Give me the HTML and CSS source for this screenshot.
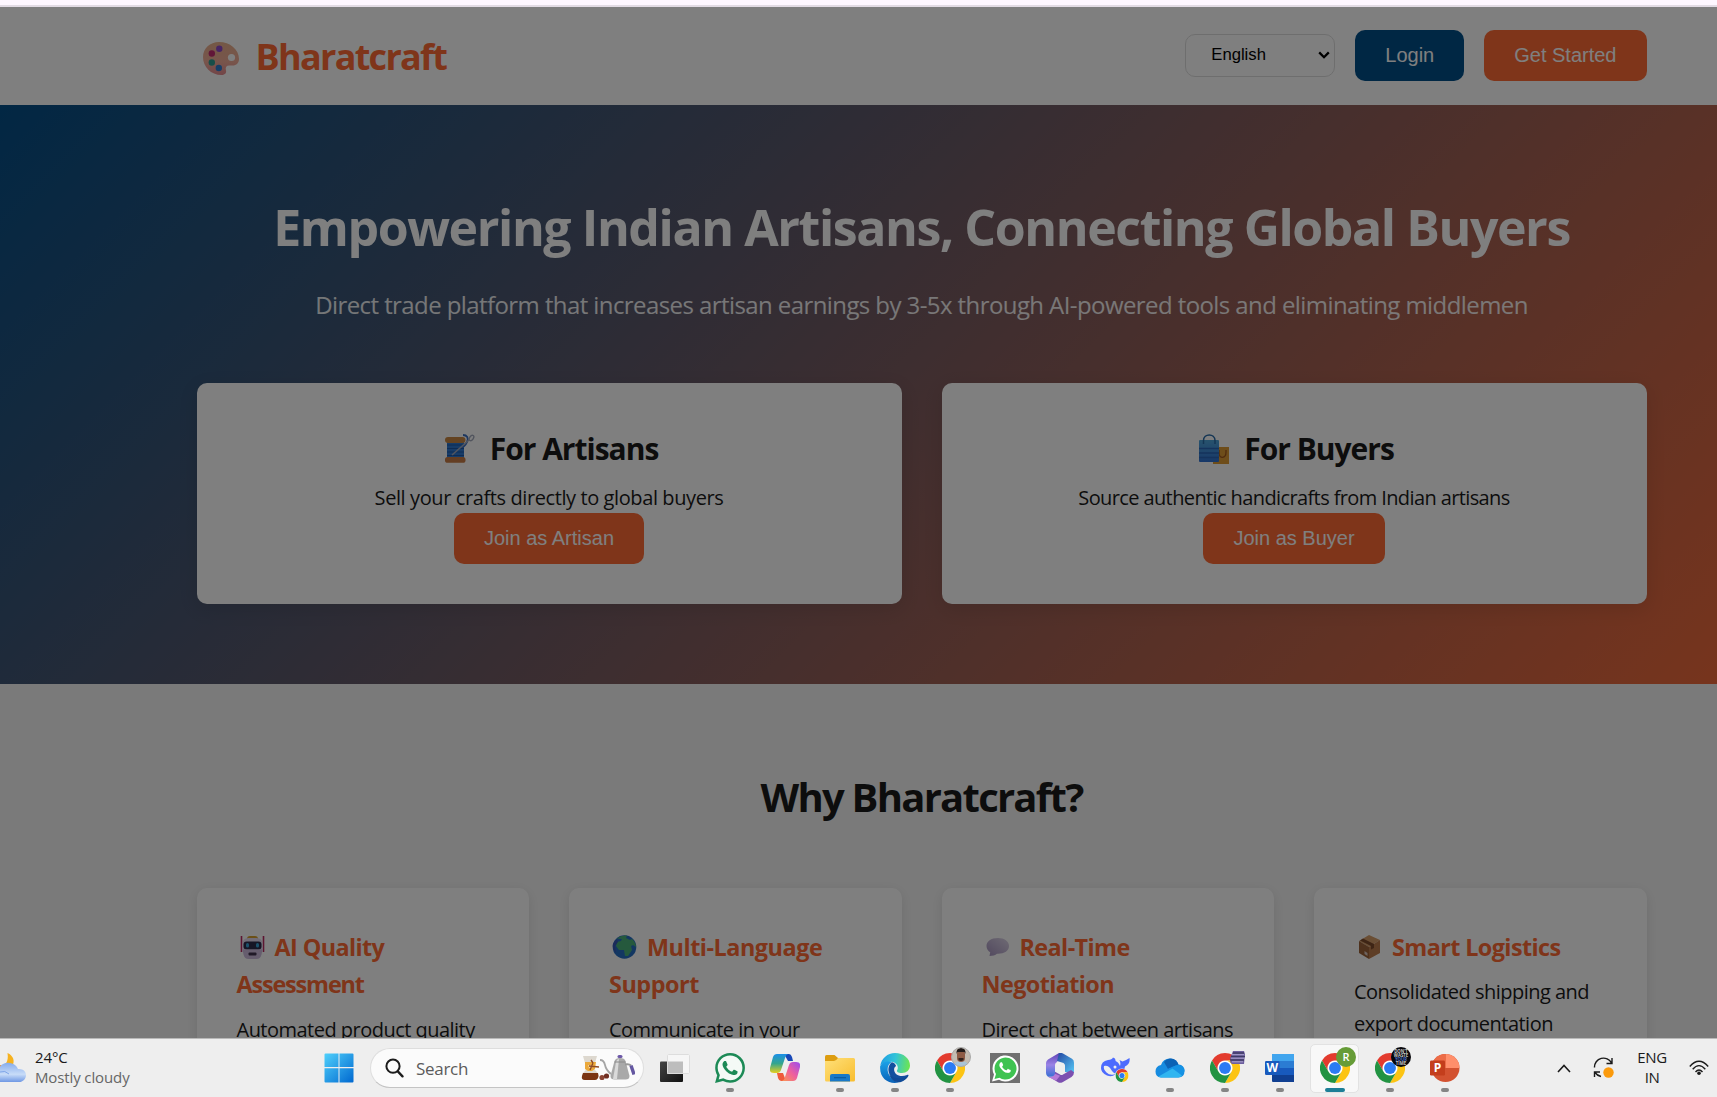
FILE: index.html
```html
<!DOCTYPE html>
<html lang="en">
<head>
<meta charset="utf-8">
<title>Bharatcraft</title>
<link rel="stylesheet" href="styles.css">
</head>
<body>
<svg class="defs" width="0" height="0" aria-hidden="true">
  <defs>
    <symbol id="chrome" viewBox="0 0 48 48">
      <circle cx="24" cy="24" r="12" fill="#fff"/>
      <path fill="#e33b2e" d="M24,12H44.7812a23.9939,23.9939,0,0,0-41.5639.0029L13.6079,30l.0093-.0024A11.9852,11.9852,0,0,1,24,12Z"/>
      <path fill="#fcc413" d="M34.3913,30.0029,24.0007,48A23.994,23.994,0,0,0,44.78,12.0031H23.9989l-.0025.0093A11.985,11.985,0,0,1,34.3913,30.0029Z"/>
      <path fill="#229342" d="M13.6086,30.0031,3.218,12.006A23.994,23.994,0,0,0,24.0025,48L34.3931,30.0029l-.0067-.0068a11.9852,11.9852,0,0,1-20.7778.007Z"/>
      <circle cx="24" cy="24" r="9.5" fill="#2b7bf3"/>
    </symbol>
    <symbol id="handset" viewBox="0 0 24 24">
      <path d="M17.472 14.382c-.297-.149-1.758-.867-2.03-.967-.273-.099-.471-.148-.67.15-.197.297-.767.966-.94 1.164-.173.199-.347.223-.644.075-.297-.15-1.255-.463-2.39-1.475-.883-.788-1.48-1.761-1.653-2.059-.173-.297-.018-.458.13-.606.134-.133.298-.347.446-.52.149-.174.198-.298.298-.497.099-.198.05-.371-.025-.52-.075-.149-.669-1.612-.916-2.207-.242-.579-.487-.5-.669-.51-.173-.008-.371-.01-.57-.01-.198 0-.52.074-.792.372-.272.297-1.04 1.016-1.04 2.479 0 1.462 1.065 2.875 1.213 3.074.149.198 2.096 3.2 5.077 4.487.709.306 1.262.489 1.694.625.712.227 1.36.195 1.871.118.571-.085 1.758-.719 2.006-1.413.248-.694.248-1.289.173-1.413-.074-.124-.272-.198-.57-.347m-5.421 7.403h-.004a9.87 9.87 0 01-5.031-1.378l-.361-.214-3.741.982.998-3.648-.235-.374a9.86 9.86 0 01-1.51-5.26c.001-5.45 4.436-9.884 9.888-9.884 2.64 0 5.122 1.03 6.988 2.898a9.825 9.825 0 012.893 6.994c-.003 5.45-4.437 9.884-9.885 9.884m8.413-18.297A11.815 11.815 0 0012.05 0C5.495 0 .16 5.335.157 11.892c0 2.096.547 4.142 1.588 5.945L.057 24l6.305-1.654a11.882 11.882 0 005.683 1.448h.005c6.554 0 11.89-5.335 11.893-11.893a11.821 11.821 0 00-3.48-8.413z"/>
    </symbol>
  </defs>
</svg>

<div class="desktop">
  <div class="browser-edge"></div>

  <div class="viewport">
    <div class="page">
      <header class="header">
        <div class="container header-row">
          <div class="logo">
            <svg class="logo-icon" viewBox="0 0 36 33">
              <defs><linearGradient id="pal" x1="0" y1="0" x2="0" y2="1"><stop offset="0" stop-color="#e8b08c"/><stop offset=".6" stop-color="#f0ab98"/><stop offset="1" stop-color="#e58a90"/></linearGradient></defs>
              <path fill="url(#pal)" d="M16 0C7 0 0 6.500 0 15c0 10 8 18 18.500 18 4 0 5.200-2.400 4.400-5-.7-2.600.6-4.500 3.200-4.500h3.400c4 0 6.500-2.500 6.500-6.500C36 7.500 27 0 16 0Z"/>
              <ellipse cx="28.500" cy="15.500" rx="3.600" ry="3.500" fill="#fff"/>
              <circle cx="16.300" cy="6.700" r="3.200" fill="#8f4ac8"/>
              <circle cx="8.800" cy="11.500" r="3.200" fill="#c22c70"/>
              <circle cx="8.800" cy="20.500" r="3.200" fill="#2f9d93"/>
              <circle cx="15.800" cy="26" r="3.200" fill="#2f7ccf"/>
            </svg>
            <span class="logo-text">Bharatcraft</span>
          </div>
          <nav class="controls">
            <div class="language"><span>English</span>
              <svg class="caret" viewBox="0 0 12 8"><path d="M1.200 1.400 6 6.200l4.800-4.800" fill="none" stroke="#000" stroke-width="2.300"/></svg>
            </div>
            <button class="btn btn-blue">Login</button>
            <button class="btn">Get Started</button>
          </nav>
        </div>
      </header>

      <section class="hero">
        <div class="container">
          <h1 class="hero-title">Empowering Indian Artisans, Connecting Global Buyers</h1>
          <p class="hero-sub">Direct trade platform that increases artisan earnings by 3-5x through AI-powered tools and eliminating middlemen</p>
          <div class="roles">
            <article class="role">
              <h3 class="role-title">
                <svg class="role-icon" viewBox="0 0 30 30">
                  <rect x="2" y="5" width="17" height="20" fill="#2f79d0"/>
                  <path d="M2 11h17M2 14.500h17M2 18h17M2 21.500h17" stroke="#1d58a8" stroke-width="1"/>
                  <rect x="0" y="3" width="20.500" height="6" rx="3" fill="#c98742"/>
                  <rect x="0" y="23" width="20.500" height="5.800" rx="2.600" fill="#c87c46"/>
                  <path d="M18 1c4 0 6 3 4 7s-4 5-5 5" fill="none" stroke="#3b6fc0" stroke-width="1.800"/>
                  <path d="M7 21 24 6" stroke="#a4aabc" stroke-width="1.600"/>
                  <ellipse cx="26.500" cy="4" rx="1.800" ry="3" transform="rotate(35 26.500 4)" fill="none" stroke="#a4aabc" stroke-width="1.400"/>
                </svg><span>For Artisans</span>
              </h3>
              <p class="role-text">Sell your crafts directly to global buyers</p>
              <button class="btn">Join as Artisan</button>
            </article>
            <article class="role">
              <h3 class="role-title">
                <svg class="role-icon" viewBox="0 0 30 30">
                  <rect x="14" y="13" width="16" height="17" fill="#dc9a35"/>
                  <path d="M20 16v3c0 6 7 6 7-1v-2" fill="none" stroke="#a0571d" stroke-width="1.300"/>
                  <defs><linearGradient id="bag" x1="0" y1="0" x2="0" y2="1"><stop offset="0" stop-color="#4fa6dc"/><stop offset="1" stop-color="#2f70d0"/></linearGradient></defs>
                  <rect x="0" y="6" width="20" height="22" rx="1" fill="url(#bag)"/>
                  <path d="M0 14.500h20M0 19h20M0 23.500h20" stroke="#2a66b8" stroke-width="1.300"/>
                  <path d="M4.500 10V6.500C4.500-1 16-1 16 6.500V10" fill="none" stroke="#286ba8" stroke-width="1.500"/>
                </svg><span>For Buyers</span>
              </h3>
              <p class="role-text role-text-long">Source authentic handicrafts from Indian artisans</p>
              <button class="btn">Join as Buyer</button>
            </article>
          </div>
        </div>
      </section>

      <section class="why">
        <div class="container">
          <h2 class="why-title">Why Bharatcraft?</h2>
          <div class="features">
            <article class="feature">
              <h3 class="feature-title"><svg class="feature-icon" viewBox="0 0 25 24">
                <path d="M1.500 1v16M23.500 1v16" stroke="#b82a63" stroke-width="1.600"/>
                <path d="M7 4q0-3 3-3h5q3 0 3 3z" fill="#d6a12e"/>
                <path d="M2.500 9q0-6 6-6h8q6 0 6 6v8h-20z" fill="#e3d8ef"/>
                <rect x="3.500" y="6.500" width="18" height="8" rx="3" fill="#2c2c4a"/>
                <rect x="6" y="8" width="3" height="4.500" rx="1.500" fill="#39a5d8"/><rect x="16" y="8" width="3" height="4.500" rx="1.500" fill="#39a5d8"/>
                <path d="M2.500 14.500h20l-1 5q-1 4.500-5 4.500h-8q-4 0-5-4.500z" fill="#cdbbdd"/>
                <rect x="8.500" y="17.500" width="8" height="3" rx="1" fill="#40324f"/>
              </svg>AI Quality <span class="tight">Assessment</span></h3>
              <p class="feature-text">Automated product quality inspection using AI</p>
            </article>
            <article class="feature">
              <h3 class="feature-title loose"><svg class="feature-icon" viewBox="0 0 25 24">
                <circle cx="12.500" cy="12" r="11.800" fill="#276fc4"/>
                <path d="M5 3.500Q9 0 15 .6L14 3l4 2 2-1q4 4 4 8l-3-2-2 1 1 4-4 6-3 0-1-6-5 0-3-4 1-4 4-1 1-2z" fill="#4bb37b"/>
                <path d="M.9 9Q3 5 5 4l1 3-3 4 1 7Q0 14 .9 9" fill="#3656b5"/>
              </svg>Multi-Language Support</h3>
              <p class="feature-text">Communicate in your preferred language</p>
            </article>
            <article class="feature">
              <h3 class="feature-title"><svg class="feature-icon" viewBox="0 0 25 24">
                <defs><linearGradient id="bub" x1="1" y1="0" x2="0" y2="1"><stop offset="0" stop-color="#ded6e8"/><stop offset="1" stop-color="#a391bd"/></linearGradient></defs>
                <path d="M13 3C6 3 1.500 6.500 1.500 11c0 3 1.700 5 3.700 6.300L4.500 21c3 0 6-1 7.500-2.300 7 .3 12-2.700 12-7.700 0-4.500-4.500-8-11-8z" fill="url(#bub)"/>
              </svg>Real-Time Negotiation</h3>
              <p class="feature-text">Direct chat between artisans and buyers</p>
            </article>
            <article class="feature">
              <h3 class="feature-title"><svg class="feature-icon" viewBox="0 0 25 24">
                <path d="M2 6 12 0l11 5-11 7z" fill="#d49c68"/>
                <path d="M2 6l10 6v12L2 18z" fill="#9c6238"/>
                <path d="M12 12 23 5v13l-11 6z" fill="#bd7c4c"/>
                <path d="M6 3.500 17 9v4l-3 1.500V11L3 5.500" fill="#7c4b2a"/>
                <path d="M7.500 16l3 2v3l-3-2z" fill="#dbc8c0"/>
              </svg>Smart Logistics</h3>
              <p class="feature-text">Consolidated shipping and export documentation</p>
            </article>
          </div>
        </div>
      </section>
    </div>
    <div class="scrim"></div>
  </div>

  <footer class="taskbar">
    <div class="weather">
      <svg class="weather-icon" viewBox="0 0 26 30">
        <defs><linearGradient id="cl" x1="0" y1="0" x2="0" y2="1"><stop offset="0" stop-color="#86acec"/><stop offset=".6" stop-color="#c8dcf8"/><stop offset="1" stop-color="#6f98e4"/></linearGradient></defs>
        <path d="M7.500 0c6 2.500 7.500 8 5 13L6 17H0v-3c5-1 9-5 7.500-14z" fill="#f6b21f"/>
        <path d="M0 12q3 1.500 5-1v5H0z" fill="#f07f1d"/>
        <path d="M0 13.500Q4 9 10 10q6 .8 8 6c5-.5 8 2.500 8 6.200S23 29 19 29H0z" fill="url(#cl)"/>
        <path d="M0 19q5-2 9 2" stroke="#7ea5e8" fill="none"/>
      </svg>
      <div class="weather-info"><span>24°C</span><span class="muted">Mostly cloudy</span></div>
    </div>
    <div class="slot">
      <svg class="icon" viewBox="0 0 30 30"><defs><linearGradient id="win" x1="0" y1="0" x2="1" y2="1"><stop offset="0" stop-color="#4fd0fb"/><stop offset="1" stop-color="#0068d0"/></linearGradient></defs>
      <path fill="url(#win)" d="M1.500.5H14.500V14H.5V1.500q0-1 1-1zM15.500.5H28.500q1 0 1 1V14h-14zM.5 15.200h14v14.300H1.500q-1 0-1-1zM15.500 15.200h14v13.300q0 1-1 1H15.500z"/></svg>
    </div>
    <div class="search">
      <svg class="glass" viewBox="0 0 19 20"><circle cx="8" cy="8.200" r="6.600" fill="none" stroke="#1c1c1c" stroke-width="2"/><path d="m12.800 13.400 4.700 5" stroke="#1c1c1c" stroke-width="2.300" stroke-linecap="round"/></svg>
      <span class="search-text">Search</span>
      <svg class="coffee" viewBox="0 0 54 26">
        <path d="M2 1h14l-2 7-3 4 4 4q3 3 2 7-1 2-3 2H4q-3 0-3-2 0-5 3-7l3-4-3-4z" fill="#ddd8cf"/>
        <path d="M4 7h11l-1 7-3 2H7l-3-2z" fill="#eba93c"/><path d="M7 10h5l-1 3H8z" fill="#f6d9a0"/>
        <path d="M2 18h15q1 3 0 5t-3 2H4q-4 0-3-4z" fill="#7b3412"/>
        <path d="m8 11 10 1M12 8l-3 7M10 5l2 3" stroke="#8f4a22" stroke-width="1.400"/>
        <circle cx="21" cy="22.500" r="2.600" fill="#8b4433"/><circle cx="25.500" cy="21" r="2.600" fill="#713023"/>
        <path d="M19 5q4 0 5 5t6 9" fill="none" stroke="#a5a5a5" stroke-width="1.800"/>
        <path d="M33.500 6q1-3 5.500-3t5.500 3l4 15q0 3.500-4 3.500H33.500q-4 0-4-3.500z" fill="#a9a9a9"/><path d="M35 7q1-3 3-3l-2 20-4 0z" fill="#dadada"/><path d="M33.500 7h11" stroke="#8a8a8a"/>
        <rect x="36.500" y="0" width="5" height="3" rx="1.500" fill="#6d59a8"/>
        <path d="M44 9.500q4-1 6 1" fill="none" stroke="#999" stroke-width="2"/><path d="m50 10.500 3 9" fill="none" stroke="#6558a2" stroke-width="3.400"/>
      </svg>
    </div>
    <div class="apps">
      <div class="slot"><svg class="icon" viewBox="0 0 30 30"><defs><linearGradient id="tv" x1="0" y1="0" x2="1" y2="1"><stop offset="0" stop-color="#444"/><stop offset="1" stop-color="#111"/></linearGradient></defs><rect x="0" y="8.500" width="23" height="20.500" rx="1" fill="url(#tv)"/><rect x="7" y="1" width="23" height="20" rx="1" fill="#f6f6f6"/><path d="M7 8.500h16V21H8q-1 0-1-1z" fill="#bdbdbd"/><rect x="7.500" y="1.500" width="22" height="19" rx="1" fill="none" stroke="#ddd"/></svg></div>
      <div class="slot running"><svg class="icon wa" viewBox="0 0 24 24"><path d="M12 1.200A10.700 10.700 0 0 1 12 22.700Q9 22.700 6.300 21.200L1.600 22.400 2.800 17.700A10.700 10.700 0 0 1 12 1.200z" fill="#f4faf6"/><use href="#handset"/></svg></div>
      <div class="slot"><svg class="icon" viewBox="0 0 30 30">
        <defs><linearGradient id="c1" x1="0" y1="0" x2="0" y2="1"><stop offset="0" stop-color="#1b8fe8"/><stop offset=".5" stop-color="#34a58e"/><stop offset="1" stop-color="#e5cf1f"/></linearGradient><linearGradient id="c2" x1="1" y1="0" x2="0" y2="1"><stop offset="0" stop-color="#9a4df0"/><stop offset=".5" stop-color="#ee5f9e"/><stop offset="1" stop-color="#fb9b4f"/></linearGradient></defs>
        <path d="M14 1h5q2 0 3 3l1 4h-5z" fill="#1748b8"/>
        <path d="M16 28h-5q-2 0-3-3l-1-5h6z" fill="#ef5b3a"/>
        <path d="M7 1h12q-3 0-4 4l-4 12q-1 3-4 3H4q-5 0-4-5L3 4q1-3 4-3z" fill="url(#c1)"/>
        <path d="M23 28H11q3 0 4-4l4-12q1-3 4-3h3q5 0 4 5l-3 11q-1 3-4 3z" fill="url(#c2)"/>
      </svg></div>
      <div class="slot running"><svg class="icon" viewBox="0 0 30 30"><defs><linearGradient id="fo" x1="0" y1="0" x2="1" y2="1"><stop offset="0" stop-color="#ffe07a"/><stop offset="1" stop-color="#f8bd2e"/></linearGradient></defs><path d="M0 3.500Q0 2 1.500 2h8L13 5v4H0z" fill="#dd9d10"/><path d="M0 8h9q2 0 4-3h15.500Q30 5 30 6.500V27q0 1.500-1.500 1.500h-27Q0 28.500 0 27z" fill="url(#fo)"/><path d="M5 28.500V23q0-2 2-2h16q2 0 2 2v5.500z" fill="#1879c8"/><path d="M9 24.700h12" stroke="#0b5a9d" stroke-width="1.200"/></svg></div>
      <div class="slot running"><svg class="icon" viewBox="0 0 30 30"><defs><linearGradient id="e1" x1="0" y1=".3" x2="1" y2=".4"><stop offset="0" stop-color="#1f9de4"/><stop offset=".5" stop-color="#32c3d8"/><stop offset="1" stop-color="#6ce552"/></linearGradient><linearGradient id="e2" x1="0" y1="0" x2="0" y2="1"><stop offset="0" stop-color="#1ba2e8"/><stop offset="1" stop-color="#0a62b8"/></linearGradient></defs>
        <path d="M.3 12.500C1.500 5.500 7.500 0 15 0c8.500 0 15 5.500 15 12.500 0 4.500-3.500 7.500-8 7.500-4 0-5.500-1.500-5-2.500 1.700-2 1-7-4-8.500-5-1-10 1-12.700 3.500z" fill="url(#e1)"/>
        <path d="M.2 13C3 8.500 8.500 7.500 12 9c-4 2-5 6-4 10 1 5 6 9.500 11 10.300C10 32-1 26 .2 13z" fill="url(#e2)"/>
        <path d="M12 9.200c-6 4-4.500 15.800 5.500 18.300 5 1 8.500-1 10.800-4.500.5-1-.4-1.500-1.200-1-7 3-13-.5-13-5.500 0-1.500.6-2.700 2-3.500C15.500 11 14 9.500 12 9.200z" fill="#124f9f"/>
        <path d="M9 21c2 6 6 9 12 8 3-1 6-3.500 7.500-6.500-6 4-15 4-19.500-1.500z" fill="#0f4a97"/>
      </svg></div>
      <div class="slot running"><svg class="icon"><use href="#chrome"/></svg>
        <svg class="badge" viewBox="0 0 20 20"><defs><clipPath id="av"><circle cx="10" cy="10" r="9.500"/></clipPath></defs><g clip-path="url(#av)"><rect width="20" height="20" fill="#c4bcb2"/><path d="M2 20q1-6 8-6t8 6z" fill="#a8c4d8"/><rect x="6" y="3" width="8" height="12" rx="4" fill="#8e5b45"/><path d="M5.500 7Q5 1 10 1t4.500 6l-1-2h-7z" fill="#211b1a"/><path d="M7.500 11h5v2q-2.500 2-5 0z" fill="#33221d"/></g><circle cx="10" cy="10" r="9.500" fill="none" stroke="#a9a9a9"/></svg></div>
      <div class="slot"><svg class="icon" viewBox="0 0 30 30"><rect width="30" height="30" fill="#707070"/><path d="M2 28.500 4 21.500A13 13 0 1 1 9 26.700z" fill="#fff"/><path d="M4.500 26 6 21A11 11 0 1 1 9.500 24.700z" fill="#3fc351"/><g transform="translate(3.600 3.200) scale(.95)" fill="#fff"><path d="M17.472 14.382c-.297-.149-1.758-.867-2.030-.967-.273-.099-.471-.148-.67.15l-.94 1.164c-.173.199-.347.223-.644.075-2-.8-3.400-2.200-4.043-3.534-.173-.297-.018-.458.13-.606.500-.500.900-.900.719-1.537l-.916-2.207c-.242-.579-.487-.5-.669-.51-.900-.02-1.900 0-2.402 2.841 0 1.462 1.065 2.875 1.213 3.074 2.500 3.500 4.600 4.700 6.771 5.112 1.800.5 3.700-.3 3.877-1.295.248-.694.248-1.289.173-1.413z"/></g></svg></div>
      <div class="slot"><svg class="icon" viewBox="0 0 30 30"><defs><linearGradient id="m1" x1="0" y1="0" x2="0" y2="1"><stop offset="0" stop-color="#5c3fb4"/><stop offset=".5" stop-color="#9a83e6"/><stop offset="1" stop-color="#3a6fd4"/></linearGradient><linearGradient id="m2" x1="0" y1="0" x2="1" y2="1"><stop offset="0" stop-color="#2344a0"/><stop offset="1" stop-color="#56c8f6"/></linearGradient></defs>
        <path d="M17 0 14 0 3 6.500Q1 8 1 10v10q0 2.500 2 3.700l7 0V12q0-2 2-3z" fill="url(#m1)"/>
        <path d="M14 0q2-.7 4 .5l9 5.300q2 1.200 2 4v10L20 19v-6.500q0-1.500-1.500-2.500L12 8z" fill="url(#m2)"/>
        <path d="M3 23.700 7 25.500l6 3.700q2 1.300 4.500 0l9-5.200q2.500-1.500 2.500-4.700L26 17l-8 4.500q-1.500 1-3 0l-5-2.800v3q0 2.500-3 2.500z" fill="#7c50b0"/><path d="M3 23.700q5 1 7-3l5 2-4 5z" fill="#b87ad8"/>
      </svg></div>
      <div class="slot"><svg class="icon" viewBox="0 0 30 30"><path d="M1 15Q1 8 8 7q4-.5 5-2.500Q16 5 15.500 8q3 1 4.500 5 1-3-.5-6l3 1.500Q25 8 29.500 5q1 6-4.500 8.500-1 6-5 9l-5-1q-3 3-8 1Q1 20 1 15z" fill="#4d6bfe"/><path d="M4 13q5-1 8 5 1.500 2 4 3-6 2-9.500-1.500T4 13z" fill="#eee"/><circle cx="15" cy="14" r="1.500" fill="#eee"/><circle cx="22" cy="22.500" r="7" fill="#eee"/><use href="#chrome" x="15.500" y="16" width="13" height="13"/></svg></div>
      <div class="slot running"><svg class="icon" viewBox="0 0 30 30"><path d="M6 24.500Q.5 24 .5 18.500T6 12q2-6.500 9-6.500 6 0 8.500 6 6 .5 6 6.500t-6 6.500z" fill="#168be0"/><path d="M9 9q2.500-3.500 7-3.500 5.500.3 7.500 6L13 16z" fill="#0b62b5"/><path d="m13 16 5-2.500q5-3 9.500 0 2 2 2 4.500l-2 4z" fill="#1592e4"/><path d="m3.500 23.500 14-8 9.500 7q-1.500 2-4 2H6q-1.500 0-2.500-1z" fill="#2fb5f0"/></svg></div>
      <div class="slot running"><svg class="icon"><use href="#chrome"/></svg>
        <svg class="badge" viewBox="0 0 20 20"><path d="M7 4h11l1 3-1 10H6L4 15l1-2-1-2 1-2z" fill="#6d5f9f"/><path d="M7 6h11M5 9.500h14M4 13h14" stroke="#3f3b66" stroke-width="1.300"/><path d="M6 7.700h12M5 11.200h13M6 14.800h11" stroke="#aca3ce" stroke-width="1"/></svg></div>
      <div class="slot running"><svg class="icon" viewBox="0 0 30 30"><path d="M7 1h22v7H7z" fill="#41a5ee"/><path d="M7 8h22v7H7z" fill="#2b7cd3"/><path d="M7 15h22v7H7z" fill="#185abd"/><path d="M7 22h22v7H8q-1 0-1-1z" fill="#103f91"/><rect x="0" y="8" width="14.500" height="14" rx="1.300" fill="#185abd"/><text x="7.200" y="19" class="tile-letter">W</text></svg></div>
      <div class="slot running active"><svg class="icon"><use href="#chrome"/></svg>
        <svg class="badge" viewBox="0 0 20 20"><circle cx="10" cy="10" r="10" fill="#669c37"/><text x="10" y="13.800" class="avatar-letter">R</text></svg></div>
      <div class="slot running"><svg class="icon"><use href="#chrome"/></svg>
        <svg class="badge" viewBox="0 0 20 20"><circle cx="10" cy="10" r="10" fill="#08080c"/><g class="avatar-words"><text x="10" y="5.500">DON'T</text><text x="10" y="9.700">WASTE</text><text x="10" y="14" class="avatar-blue">YOUR</text><text x="10" y="18">TIME</text></g></svg></div>
      <div class="slot running"><svg class="icon" viewBox="0 0 30 30"><circle cx="15.500" cy="15" r="14" fill="#d35230"/><path d="M15.500 1A14 14 0 0 1 29.500 15h-14z" fill="#ff8f6b"/><path d="M15.500 1v14H1.500A14 14 0 0 1 15.500 1z" fill="#ed6c47"/><rect x="0" y="7.500" width="15" height="15" rx="1.300" fill="#c43e1c"/><text x="7.500" y="19" class="tile-letter">P</text></svg></div>
    </div>
    <div class="tray">
      <svg class="chev" viewBox="0 0 14 9"><path d="m1 8 6-6.500L13 8" fill="none" stroke="#1a1a1a" stroke-width="1.600"/></svg>
      <svg class="sync" viewBox="0 0 22 22"><path d="M1.500 10.500A9 9 0 0 1 18.500 6M19 1v5.500h-5.500M7 15H1.500v5M2 15.500Q4 18.500 8 19.500" fill="none" stroke="#1a1a1a" stroke-width="1.400"/><circle cx="15.500" cy="15.500" r="5.200" fill="#fb9a0c"/></svg>
      <div class="lang"><span>ENG</span><span>IN</span></div>
      <svg class="wifi" viewBox="0 0 20 16"><g fill="none" stroke="#1a1a1a" stroke-width="1.400"><path d="M.8 6.500Q10-4 19.200 6.500M3.700 9.300Q10 2 16.300 9.300M6.500 12Q10 8 13.500 12"/></g><circle cx="10" cy="13.300" r="1.800" fill="#1a1a1a"/></svg>
    </div>
  </footer>
</div>
</body>
</html>
```

FILE: styles.css
```css
* { box-sizing: border-box; margin: 0; padding: 0; }

body {
  overflow: hidden;
  font-family: "Open Sans", "Noto Sans", sans-serif;
  color: #1a1a1a;
}

.defs { position: absolute; }

.desktop {
  display: flex;
  flex-direction: column;
  width: 1717px;
  height: 1097px;
  overflow: hidden;
}

.browser-edge {
  flex: none;
  height: 7px;
  background: #fef7ff;
  border-bottom: 2px solid #e2dbe4;
}

.viewport {
  position: relative;
  flex: 1;
  min-height: 0;
  overflow: hidden;
}

.scrim {
  position: absolute;
  inset: 0;
  background: rgba(0, 0, 0, 0.5);
}

/* Landing page */
.page { width: 1919px; margin-left: -38px; background: #f5f5f5; }
.container { width: 1450px; margin: 0 auto; }

.header { height: 98px; padding: 20px 0; background: #fff; }
.header-row { display: flex; align-items: center; justify-content: space-between; height: 58px; }

.logo { display: flex; align-items: center; padding-top: 2px; color: #ff6b35; }
.logo-icon { width: 36px; height: 33px; margin: 3px 17px 0 6px; }
.logo-text { font-size: 36px; font-weight: 700; line-height: 58px; letter-spacing: -1.7px; }

.controls { display: flex; align-items: center; gap: 20px; padding-bottom: 2px; }

.language {
  display: flex;
  align-items: center;
  justify-content: space-between;
  width: 150px;
  height: 43px;
  padding: 0 4px 0 25px;
  border: 1px solid #ddd;
  border-radius: 10px;
  font-family: "Liberation Sans", Arial, sans-serif;
  font-size: 16.67px;
  color: #000;
}
.caret { width: 12px; height: 8px; }

.btn {
  height: 51px;
  padding: 0 30px;
  border: 0;
  border-radius: 10px;
  background: #ff6b35;
  color: #fff;
  font-family: "Liberation Sans", Arial, sans-serif;
  font-size: 20px;
}
.btn-blue { background: #004e89; }

.hero {
  height: 579px;
  padding: 82px 0 78px;
  background: linear-gradient(135deg, #004e89 0%, #ff6b35 100%);
  text-align: center;
}
.hero-title { font-size: 50px; line-height: 80px; letter-spacing: -1.41px; color: #fff; white-space: nowrap; }
.hero-sub { margin: 19px 0 59px; font-size: 24px; line-height: 38px; letter-spacing: -0.585px; color: #fff; opacity: 0.9; white-space: nowrap; }

.roles { display: grid; grid-template-columns: 1fr 1fr; gap: 40px; }
.role {
  padding: 42px 40px 40px;
  border-radius: 10px;
  background: #fff;
  box-shadow: 0 5px 19px rgba(0, 0, 0, 0.1);
}
.role-title {
  display: flex;
  align-items: center;
  justify-content: center;
  gap: 15px;
  margin-bottom: 9px;
  padding-left: 5px;
  font-size: 30px;
  line-height: 48px;
  letter-spacing: -1px;
}
.role-icon { width: 30px; height: 30px; }
.role-text { margin-bottom: -1px; font-size: 20px; line-height: 32px; letter-spacing: -0.4px; }
.role-text-long { letter-spacing: -0.61px; }
.role .btn { display: block; margin: 0 auto; }

.why { padding: 81px 0 80px; }
.why-title { margin-bottom: 59px; font-size: 40px; line-height: 64px; letter-spacing: -1.75px; text-align: center; }

.features { display: grid; grid-template-columns: repeat(4, 1fr); gap: 40px; }
.feature {
  height: 300px;
  padding: 41px 40px 40px;
  border-radius: 10px;
  background: #fff;
  box-shadow: 0 3px 13px rgba(0, 0, 0, 0.1);
}
.feature-title { margin-bottom: 10px; font-size: 23.4px; line-height: 37.4px; letter-spacing: -0.6px; color: #ff6b35; }
.feature-title .tight { letter-spacing: -1.15px; }
.feature-title.loose { letter-spacing: -0.47px; }
.feature-icon { width: 25px; height: 24px; margin: 0 10px 0 3px; vertical-align: -3px; }
.feature-text { margin-right: -4px; font-size: 20px; line-height: 32px; letter-spacing: -0.52px; }

/* Taskbar */
.taskbar {
  flex: none;
  display: flex;
  align-items: center;
  height: 59px;
  border-top: 1px solid #b9b9b9;
  background: #eee;
}

.weather { display: flex; align-items: center; width: 311px; height: 58px; }
.weather-icon { width: 26px; height: 30px; margin-right: 9px; }
.weather-info, .lang { display: flex; flex-direction: column; padding-bottom: 2px; font-size: 15px; line-height: 20px; letter-spacing: -0.12px; }
.muted { color: #666; }

.slot {
  position: relative;
  flex: none;
  display: flex;
  align-items: center;
  justify-content: center;
  width: 55px;
  height: 58px;
}
.icon { width: 30px; height: 30px; }
.wa { fill: #1c8a56; }

.running::after {
  content: "";
  position: absolute;
  bottom: 5px;
  width: 8px;
  height: 4px;
  border-radius: 2px;
  background: #858585;
}
.active::before {
  content: "";
  position: absolute;
  inset: 5px 3px 4px 3px;
  border: 1px solid #e2e2e2;
  border-radius: 5px;
  background: #f8f8f8;
}
.active .icon { position: relative; }
.active::after { width: 20px; background: #1d7f97; }

.badge { position: absolute; top: 8px; left: 29px; width: 20px; height: 20px; }

.tile-letter { font: 700 12px "Open Sans", sans-serif; fill: #fff; text-anchor: middle; }
.avatar-letter { font: 600 11px "Open Sans", sans-serif; fill: #fff; text-anchor: middle; }
.avatar-words { font: 700 4.3px "Open Sans", sans-serif; fill: #c8c8c8; text-anchor: middle; }
.avatar-blue { fill: #4f74c8; }

.search {
  display: flex;
  align-items: center;
  width: 274px;
  height: 40px;
  margin: 0 3px 0 4px;
  padding: 0 8px 0 14px;
  border: 1px solid #dedede;
  border-bottom-color: #c4c4c4;
  border-radius: 20px;
  background: #fbfbfb;
}
.glass { width: 19px; height: 20px; }
.search-text { flex: 1; margin-left: 12px; font-size: 17px; letter-spacing: -0.3px; color: #5c5c5c; }
.coffee { width: 54px; height: 26px; }

.apps { display: flex; }

.tray { display: flex; align-items: center; flex: 1; height: 58px; padding-left: 85px; }
.chev { width: 14px; height: 9px; margin-right: 22px; }
.sync { width: 22px; height: 22px; margin-right: 22px; }
.lang { width: 30px; align-items: center; letter-spacing: -0.4px; }
.wifi { width: 20px; height: 16px; margin-left: 22px; }
```
